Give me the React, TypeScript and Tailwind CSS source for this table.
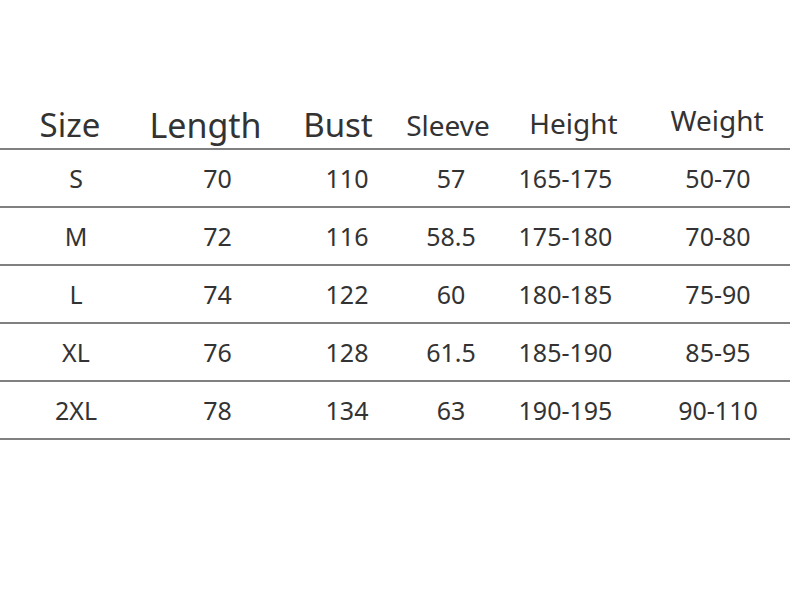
const headers = [
  { label: 'Size', cls: 'w-[140px] pt-[10px] text-[33px] pl-[0px]' },
  { label: 'Length', cls: 'w-[135px] pt-[10px] text-[34px] pr-[4px]' },
  { label: 'Bust', cls: 'w-[120px] pt-[10px] text-[33px] pl-[6px]' },
  { label: 'Sleeve', cls: 'w-[110px] pt-[13px] text-[28px] pr-[4px]' },
  { label: 'Height', cls: 'w-[135px] pt-[11px] text-[28px] pl-[2px]' },
  { label: 'Weight', cls: 'w-[150px] pt-[8px] text-[28px] pl-[4px]' },
];

// per-column nudges for the data cells
const cellCls = [
  'w-[140px] pl-[12px]',
  'w-[135px] pl-[20px]',
  'w-[120px] pl-[24px]',
  'w-[110px] pl-[2px]',
  'w-[135px] pr-[14px]',
  'w-[150px] pl-[6px]',
];

const rows = [
  ['S', '70', '110', '57', '165-175', '50-70'],
  ['M', '72', '116', '58.5', '175-180', '70-80'],
  ['L', '74', '122', '60', '180-185', '75-90'],
  ['XL', '76', '128', '61.5', '185-190', '85-95'],
  ['2XL', '78', '134', '63', '190-195', '90-110'],
];

export default function App() {
  return (
    <div
      className="w-[790px] h-[600px] bg-white pt-[98px] text-[#333333]"
      style={{ fontFamily: '"Noto Sans", sans-serif' }}
    >
      {/* Header */}
      <div className="flex h-[52px] border-b-2 border-[#808080]">
        {headers.map((h) => (
          <div key={h.label} className={`${h.cls} text-center leading-none`}>
            {h.label}
          </div>
        ))}
      </div>

      {/* Rows */}
      {rows.map((r) => (
        <div key={r[0]} className="flex h-[58px] border-b-2 border-[#808080]">
          {r.map((v, i) => (
            <div key={i} className={`${cellCls[i]} pt-[16px] text-center text-[25px] leading-none`}>
              {v}
            </div>
          ))}
        </div>
      ))}
    </div>
  );
}
